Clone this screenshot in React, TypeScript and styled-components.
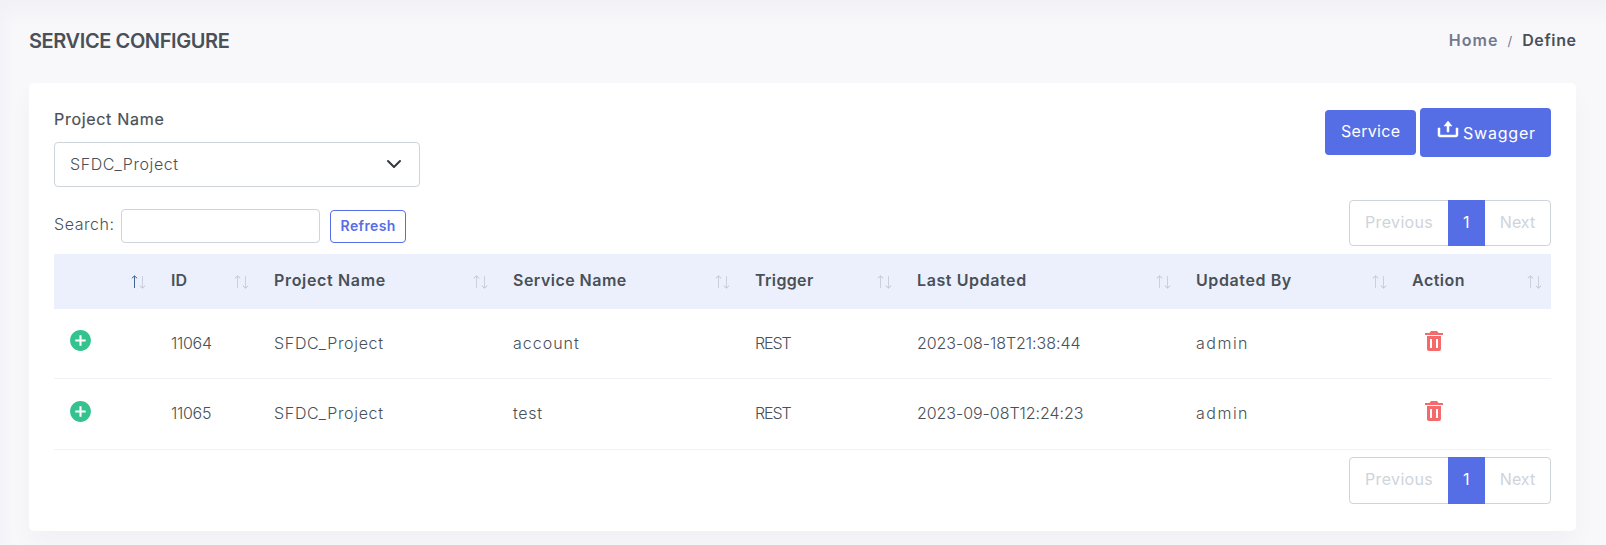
import React from 'react';
import styled, { createGlobalStyle } from 'styled-components';
import { BiSolidPlusCircle, BiSolidTrash, BiUpload } from 'react-icons/bi';

const GlobalStyle = createGlobalStyle`
  * { box-sizing: border-box; }
  body {
    margin: 0;
    background: #f8f8fb;
    color: #495057;
    font: 400 16px/24px Inter, "Noto Sans", sans-serif;
  }
`;

const Page = styled.main`
  height: 545px;
  overflow: hidden;
  padding: 0 30px 0 29px;
  background:
    linear-gradient(#f2f1f5, rgba(248, 248, 251, 0) 26px),
    linear-gradient(90deg, #f4f3f8, rgba(248, 248, 251, 0) 14px),
    #f8f8fb;
`;

const PageHeader = styled.header`
  display: flex;
  justify-content: space-between;
  align-items: center;
  height: 83px;
  padding-bottom: 2px;
`;

const Spaced = styled.span<{ $tracking?: number }>`
  letter-spacing: ${p => p.$tracking ?? 0}px;
  margin-right: ${p => -(p.$tracking ?? 0)}px;
  white-space: nowrap;
`;

const Title = styled.h4`
  margin: 0;
  font-size: 20px;
  font-weight: 600;
  letter-spacing: -0.4px;
`;

const Breadcrumb = styled.nav`
  display: flex;
  align-items: center;
  font-weight: 600;
  margin-bottom: 2px;
`;

const Crumb = styled.span<{ $muted?: boolean }>`
  color: ${p => (p.$muted ? '#74788d' : '#495057')};
`;

const Slash = styled.span`
  margin: 2px 10px 0;
  font-size: 13px;
  font-weight: 400;
  color: #74788d;
`;

const Card = styled.section`
  height: 448px;
  padding: 25px;
  border-radius: 5px;
  background: #fff;
  box-shadow: 0 12px 24px rgba(18, 38, 63, 0.03);
`;

const TopRow = styled.div`
  display: flex;
  justify-content: space-between;
  align-items: flex-start;
  height: 92px;
`;

const Field = styled.label`
  display: flex;
  flex-direction: column;
`;

const FieldName = styled.span`
  height: 34px;
  line-height: 22px;
  -webkit-text-stroke: 0.2px currentColor;
`;

const Select = styled.span`
  display: flex;
  align-items: center;
  justify-content: space-between;
  width: 366px;
  height: 45px;
  padding: 0 17px 1px 15px;
  border: 1px solid #ced4da;
  border-radius: 4px;
  font-weight: 300;
`;

const Actions = styled.div`
  display: flex;
  align-items: center;
  gap: 4px;
`;

const PrimaryButton = styled.button<{ $tall?: boolean }>`
  display: flex;
  align-items: center;
  gap: 3px;
  width: ${p => (p.$tall ? 131 : 91)}px;
  height: ${p => (p.$tall ? 49 : 45)}px;
  padding: 0 15px ${p => (p.$tall ? 2 : 3)}px 16px;
  border: 0;
  border-radius: 4px;
  background: #556ee6;
  color: #fff;
  font: inherit;

  svg {
    flex: none;
    margin-top: -5px;
    stroke: currentColor;
    stroke-width: 0.5px;
  }
  svg + span { padding-top: 3px; }
`;

const Toolbar = styled.div`
  display: flex;
  justify-content: space-between;
  align-items: flex-start;
  height: 54px;
`;

const SearchGroup = styled.div`
  display: flex;
  align-items: flex-start;
  padding-top: 9px;
`;

const SearchLabel = styled.label`
  width: 67px;
  padding-top: 3px;
  font-weight: 300;
`;

const SearchInput = styled.input`
  width: 199px;
  height: 34px;
  border: 1px solid #ced4da;
  border-radius: 4px;
  background: #fff;
`;

const RefreshButton = styled.button`
  width: 76px;
  height: 33px;
  margin: 1px 0 0 10px;
  padding: 0 0 2px;
  border: 1px solid #556ee6;
  border-radius: 4px;
  background: #fff;
  color: #556ee6;
  font: 600 14px/20px Inter, sans-serif;
`;

const Pager = styled.div<{ $height: number }>`
  display: flex;
  justify-content: space-between;
  width: 202px;
  height: ${p => p.$height}px;
  border: 1px solid #ced4da;
  border-radius: 4px;
  color: #ced4da;
`;

const PagerItem = styled.span`
  padding: 9px 15px 0;
`;

const PagerCurrent = styled.span`
  flex: none;
  width: 37px;
  margin: -1px 0;
  padding: 10px 0;
  background: #556ee6;
  color: #fff;
  text-align: center;
`;

const Table = styled.table`
  width: 1497px;
  table-layout: fixed;
  border-collapse: separate;
  border-spacing: 0;
`;

const Col = styled.col<{ $width: number }>`
  width: ${p => p.$width}px;
`;

const HeadCell = styled.th`
  height: 55px;
  padding: 0 9px 4px 16px;
  background: #ecf0fd;
  font-weight: 600;
  text-align: left;
`;

const HeadContent = styled.div`
  display: flex;
  align-items: center;
  justify-content: space-between;

  svg { margin-top: 5px; flex: none; }
`;

const Cell = styled.td<{ $height: number }>`
  height: ${p => p.$height}px;
  padding: 0 16px 2px;
  border-bottom: 1px solid #eff2f7;
  font-weight: 300;

  & > svg { display: block; }
`;

const AddIcon = styled(BiSolidPlusCircle)`
  margin: -4px 0 0 -2px;
  color: #34c38f;
`;

const TrashIcon = styled(BiSolidTrash)`
  margin: -4px 0 0 10px;
  color: #f46a6a;
`;

const Footer = styled.footer`
  display: flex;
  justify-content: flex-end;
  padding-top: 7px;
`;

function SortArrows({ ascending }: { ascending?: boolean }) {
  return (
    <svg width="15" height="14" viewBox="0 0 15 14" fill="none">
      <g stroke={ascending ? '#40668f' : '#bfc1ce'}>
        <path d="M3.5 1v12" opacity={ascending ? 1 : 0.7} />
        <path d="M.8 3.3 3.5.9l2.7 2.4" />
      </g>
      <g stroke="#bfc1ce">
        <path d="M11.5 1v12" opacity=".7" />
        <path d="M8.8 10.7l2.7 2.4 2.7-2.4" />
      </g>
    </svg>
  );
}

function Pagination({ height }: { height: number }) {
  return (
    <Pager $height={height}>
      <PagerItem><Spaced $tracking={0.35}>Previous</Spaced></PagerItem>
      <PagerCurrent>1</PagerCurrent>
      <PagerItem><Spaced $tracking={0}>Next</Spaced></PagerItem>
    </Pager>
  );
}

const columns = [
  { name: '', width: 101, tracking: 0 },
  { name: 'ID', width: 103, tracking: 0 },
  { name: 'Project Name', width: 239, tracking: 0.66 },
  { name: 'Service Name', width: 242, tracking: 0.47 },
  { name: 'Trigger', width: 162, tracking: 0.35 },
  { name: 'Last Updated', width: 279, tracking: 0.6 },
  { name: 'Updated By', width: 216, tracking: 0.6 },
  { name: 'Action', width: 155, tracking: 0.5 },
];

const rows = [
  { id: '11064', service: 'account', spacing: 1, updated: '2023-08-18T21:38:44', height: 70 },
  { id: '11065', service: 'test', spacing: 0.7, updated: '2023-09-08T12:24:23', height: 71 },
];

export default function App() {
  return (
    <>
      <GlobalStyle />
      <Page>
        <PageHeader>
          <Title>SERVICE CONFIGURE</Title>
          <Breadcrumb>
            <Crumb $muted><Spaced $tracking={1.1}>Home</Spaced></Crumb>
            <Slash>/</Slash>
            <Crumb><Spaced $tracking={0.6}>Define</Spaced></Crumb>
          </Breadcrumb>
        </PageHeader>
        <Card>
          <TopRow>
            <Field>
              <FieldName><Spaced $tracking={0.7}>Project Name</Spaced></FieldName>
              <Select>
                <Spaced $tracking={0.6}>SFDC_Project</Spaced>
                <svg width="16" height="16" viewBox="0 0 16 16" fill="none" stroke="#343a40" strokeWidth="2" strokeLinecap="round" strokeLinejoin="round">
                  <path d="M2 5l6 6 6-6" />
                </svg>
              </Select>
            </Field>
            <Actions>
              <PrimaryButton><Spaced $tracking={0.3}>Service</Spaced></PrimaryButton>
              <PrimaryButton $tall>
                <BiUpload size={24} />
                <Spaced $tracking={0.8}>Swagger</Spaced>
              </PrimaryButton>
            </Actions>
          </TopRow>
          <Toolbar>
            <SearchGroup>
              <SearchLabel htmlFor="search"><Spaced $tracking={0.55}>Search:</Spaced></SearchLabel>
              <SearchInput id="search" />
              <RefreshButton><Spaced $tracking={0.4}>Refresh</Spaced></RefreshButton>
            </SearchGroup>
            <Pagination height={46} />
          </Toolbar>
          <Table>
            <colgroup>
              {columns.map((c, i) => <Col key={i} $width={c.width} />)}
            </colgroup>
            <thead>
              <tr>
                {columns.map((c, i) => (
                  <HeadCell key={i}>
                    <HeadContent>
                      <Spaced $tracking={c.tracking}>{c.name}</Spaced>
                      <SortArrows ascending={i === 0} />
                    </HeadContent>
                  </HeadCell>
                ))}
              </tr>
            </thead>
            <tbody>
              {rows.map(r => (
                <tr key={r.id}>
                  <Cell $height={r.height}><AddIcon size={25} /></Cell>
                  <Cell $height={r.height}><Spaced $tracking={-0.3}>{r.id}</Spaced></Cell>
                  <Cell $height={r.height}><Spaced $tracking={0.68}>SFDC_Project</Spaced></Cell>
                  <Cell $height={r.height}><Spaced $tracking={r.spacing}>{r.service}</Spaced></Cell>
                  <Cell $height={r.height}><Spaced $tracking={-1.1}>REST</Spaced></Cell>
                  <Cell $height={r.height}><Spaced $tracking={-0.05}>{r.updated}</Spaced></Cell>
                  <Cell $height={r.height}><Spaced $tracking={1.5}>admin</Spaced></Cell>
                  <Cell $height={r.height}><TrashIcon size={24} /></Cell>
                </tr>
              ))}
            </tbody>
          </Table>
          <Footer><Pagination height={47} /></Footer>
        </Card>
      </Page>
    </>
  );
}
